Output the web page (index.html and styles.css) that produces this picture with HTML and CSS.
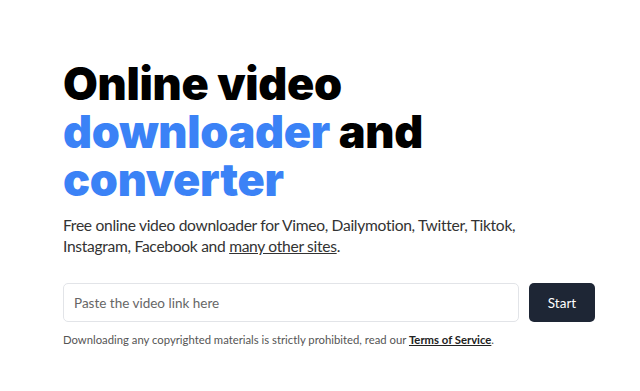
FILE: index.html
```html
<!DOCTYPE html>
<html lang="en">
<head>
    <meta charset="UTF-8">
    <meta name="viewport" content="width=device-width, initial-scale=1.0">
    <title>Online video downloader</title>
    <link rel="stylesheet" href="styles.css">
</head>
<body>
<div class="container">
    <h1>Online video <span class="blue">downloader</span> and <span class="blue">converter</span></h1>
    <p class="lead">Free online video downloader for Vimeo, Dailymotion, Twitter, Tiktok, Instagram, Facebook and <a href="#sites">many other sites</a>.</p>
    <form class="download-form" onsubmit="return false">
        <input type="text" placeholder="Paste the video link here">
        <button type="submit">Start</button>
    </form>
    <p class="note">Downloading any copyrighted materials is strictly prohibited, read our <a href="#terms">Terms of Service</a>.</p>
</div>
</body>
</html>
```

FILE: styles.css
```css
body {
    font-family: Lato, "Noto Sans", sans-serif;
    background-color: #fff;
    margin: 0;
    padding: 0;
}
.container {
    padding: 60px 45px 0 63px;
}
h1 {
    font-family: Inter, "Noto Sans", sans-serif;
    font-weight: 900;
    font-size: 45px;
    line-height: 48px;
    letter-spacing: -0.3px;
    color: #000;
    margin: 0;
    width: 400px;
}
.blue {
    color: #3b82f6;
}
.lead {
    font-size: 15.6px;
    line-height: 21px;
    letter-spacing: -0.3px;
    color: #333;
    margin: 11px 0 0;
    width: 470px;
}
.lead a {
    color: #333;
}
.download-form {
    display: flex;
    gap: 10px;
    margin-top: 26px;
}
.download-form input {
    flex: 1;
    height: 39px;
    box-sizing: border-box;
    border: 1px solid #e2e4e8;
    border-radius: 5px;
    padding: 0 10px;
    font-family: inherit;
    font-size: 13.5px;
    color: #333;
}
.download-form input::placeholder {
    color: #666;
}
.download-form button {
    width: 66px;
    height: 39px;
    border: none;
    border-radius: 5px;
    background-color: #1e2635;
    color: #fff;
    font-family: inherit;
    font-size: 13.5px;
    cursor: pointer;
}
.note {
    font-size: 11.3px;
    color: #555;
    margin: 11px 0 0;
}
.note a {
    color: #222;
    font-weight: 700;
}
```
